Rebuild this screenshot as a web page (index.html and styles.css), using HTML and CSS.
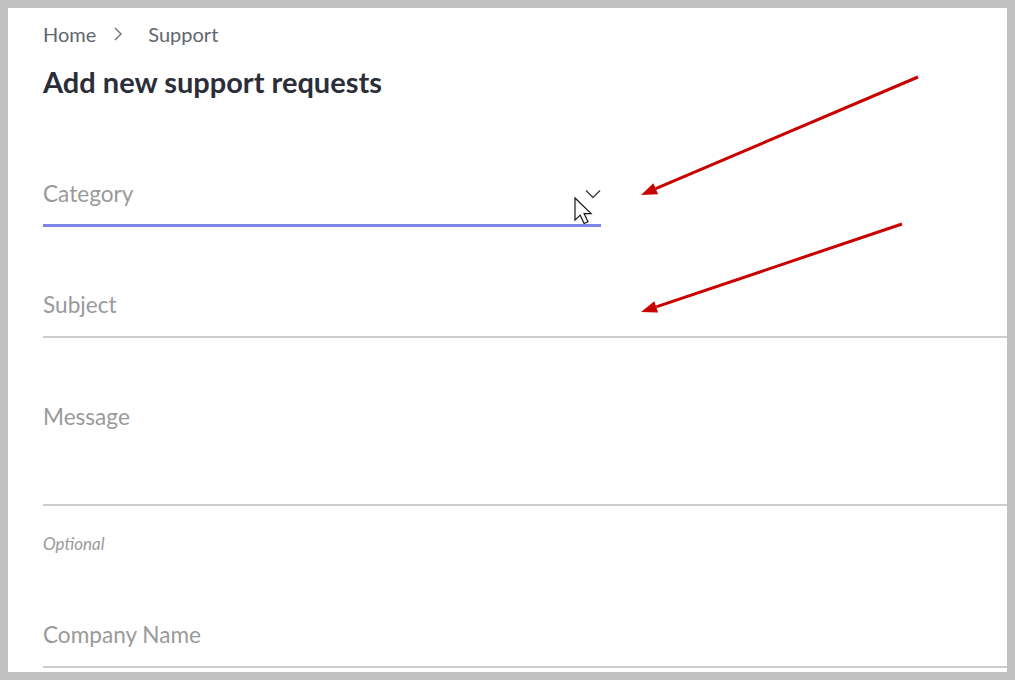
FILE: index.html
```html
<!DOCTYPE html>
<html>
<head>
<meta charset="utf-8">
<link rel="stylesheet" href="styles.css">
</head>
<body>
<div class="frame">
  <main class="panel">
    <nav class="crumbs">
      <span class="crumb">Home</span>
      <svg class="crumb-sep" width="10" height="16" viewBox="0 0 10 16"><path d="M2 2 L8 8 L2 14" fill="none" stroke="#6b6f76" stroke-width="1.4"/></svg>
      <span class="crumb">Support</span>
    </nav>
    <h1 class="title">Add new support requests</h1>
    <div class="field field-select">
      <span class="label">Category</span>
      <svg class="chev" width="16" height="10" viewBox="0 0 16 10"><path d="M1 1.5 L8 8.5 L15 1.5" fill="none" stroke="#3f424a" stroke-width="1.5"/></svg>
    </div>
    <div class="field field-subject">
      <span class="label">Subject</span>
    </div>
    <div class="field field-message">
      <span class="label">Message</span>
    </div>
    <div class="hint">Optional</div>
    <div class="field field-company">
      <span class="label">Company Name</span>
    </div>
  </main>
</div>
<svg class="overlay" width="1015" height="680" viewBox="0 0 1015 680">
  <line x1="918" y1="77" x2="655.7" y2="188.7" stroke="#c80000" stroke-width="3"/>
  <polygon points="641,195 658.1,194.2 653.4,183.2" fill="#c80000"/>
  <line x1="902" y1="224" x2="656.2" y2="306.9" stroke="#c80000" stroke-width="3"/>
  <polygon points="641,312 658.1,312.6 654.3,301.2" fill="#c80000"/>
  <polygon transform="translate(575 198) scale(1.3)" points="0,0 0,17 4,13.2 7,19.6 10,18.3 7,12 12.4,12" fill="#fff" stroke="#111" stroke-width="0.9" stroke-linejoin="miter"/>
</svg>
</body>
</html>
```

FILE: styles.css
```css
html, body {
  margin: 0;
  padding: 0;
}
body {
  background: #c0c0c0;
  width: 1015px;
  height: 680px;
  position: relative;
  overflow: hidden;
  font-family: Lato, "Open Sans", "Liberation Sans", sans-serif;
}
.frame {
  padding: 8px;
}
.panel {
  background: #fff;
  width: 964px;
  height: 650px;
  padding: 14px 0 0 35px;
  display: flex;
  flex-direction: column;
}
.crumbs {
  display: flex;
  align-items: center;
  height: 24px;
  font-size: 20px;
  color: #62666d;
}
.crumb-sep {
  margin: 0 25px 0 17px;
}
.title {
  margin: 19px 0 0 0;
  font-size: 29px;
  line-height: 34px;
  font-weight: 700;
  color: #2b2e38;
}
.field {
  position: relative;
  display: flex;
  align-items: center;
}
.label {
  display: block;
  line-height: 30px;
  font-size: 22.6px;
  color: #9a9a9a;
}
.field-select {
  width: 558px;
  padding: 80px 0 15px 0;
  border-bottom: 3px solid #7b86e6;
}
.chev {
  position: absolute;
  right: 0;
  top: 90px;
}
.field-subject {
  padding: 63px 0 16px 0;
  border-bottom: 2px solid #cdcdcd;
}
.field-message {
  padding: 64px 0 72px 0;
  border-bottom: 2px solid #cdcdcd;
  align-items: flex-start;
}
.hint {
  margin-top: 28px;
  line-height: 20px;
  font-size: 17px;
  font-style: italic;
  color: #9a9a9a;
}
.field-company {
  padding: 66px 0 16px 0;
  border-bottom: 2px solid #cdcdcd;
}
.overlay {
  position: absolute;
  left: 0;
  top: 0;
  pointer-events: none;
}
```
